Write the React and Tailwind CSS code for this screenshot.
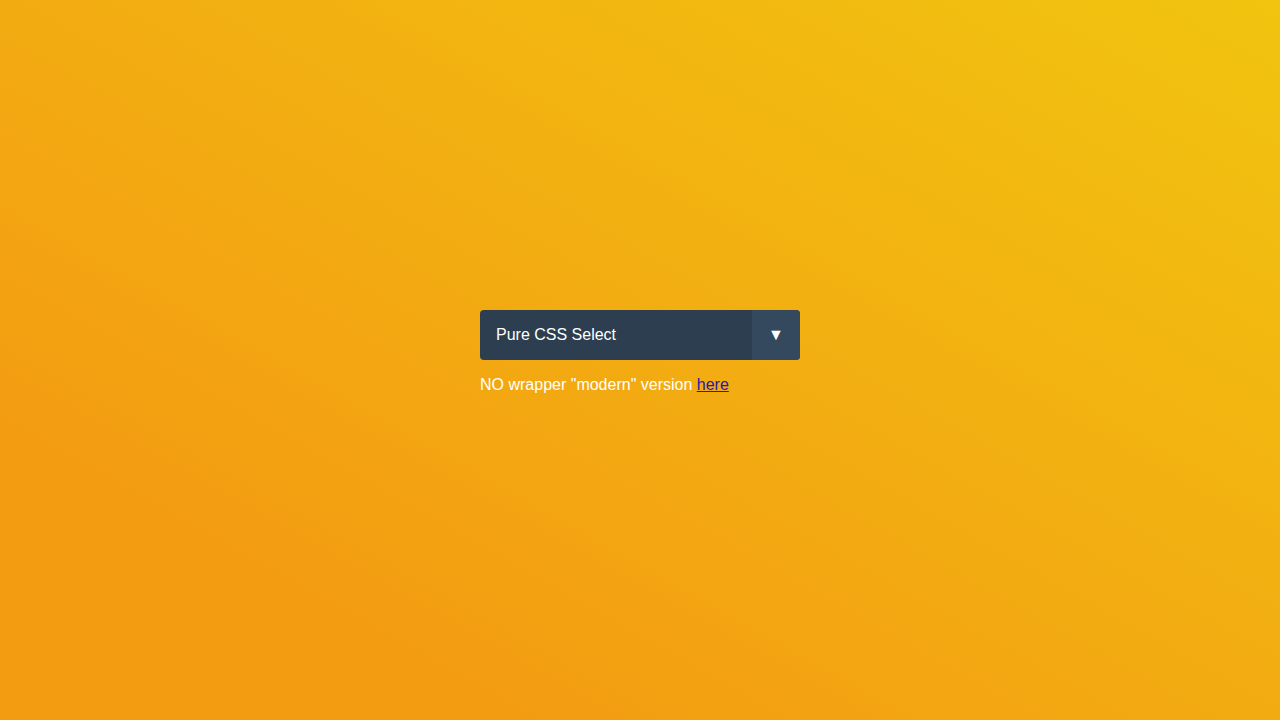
export default function App() {
  return (
    <div
      className="w-full h-[720px] flex items-center justify-center bg-linear-to-tr from-[#f39c12] from-20% to-[#f1c40f]"
      style={{ fontFamily: '"Liberation Sans", Arial, sans-serif' }}
    >
      <div className="w-[320px] flex flex-col">
        <div className="relative flex w-[320px] h-[50px] bg-[#2c3e50] rounded-[4px] overflow-hidden">
          <div className="flex-1 flex items-center pl-4 text-white text-[16px]">Pure CSS Select</div>
          <div className="w-[48px] h-full bg-[#34495e] flex items-center justify-center text-white text-[16px] leading-none">
            ▼
          </div>
        </div>
        <p className="my-4 text-white text-[16px] leading-[18px]">
          NO wrapper "modern" version <a href="#" className="text-[#2a14b0] underline">here</a>
        </p>
      </div>
    </div>
  );
}
